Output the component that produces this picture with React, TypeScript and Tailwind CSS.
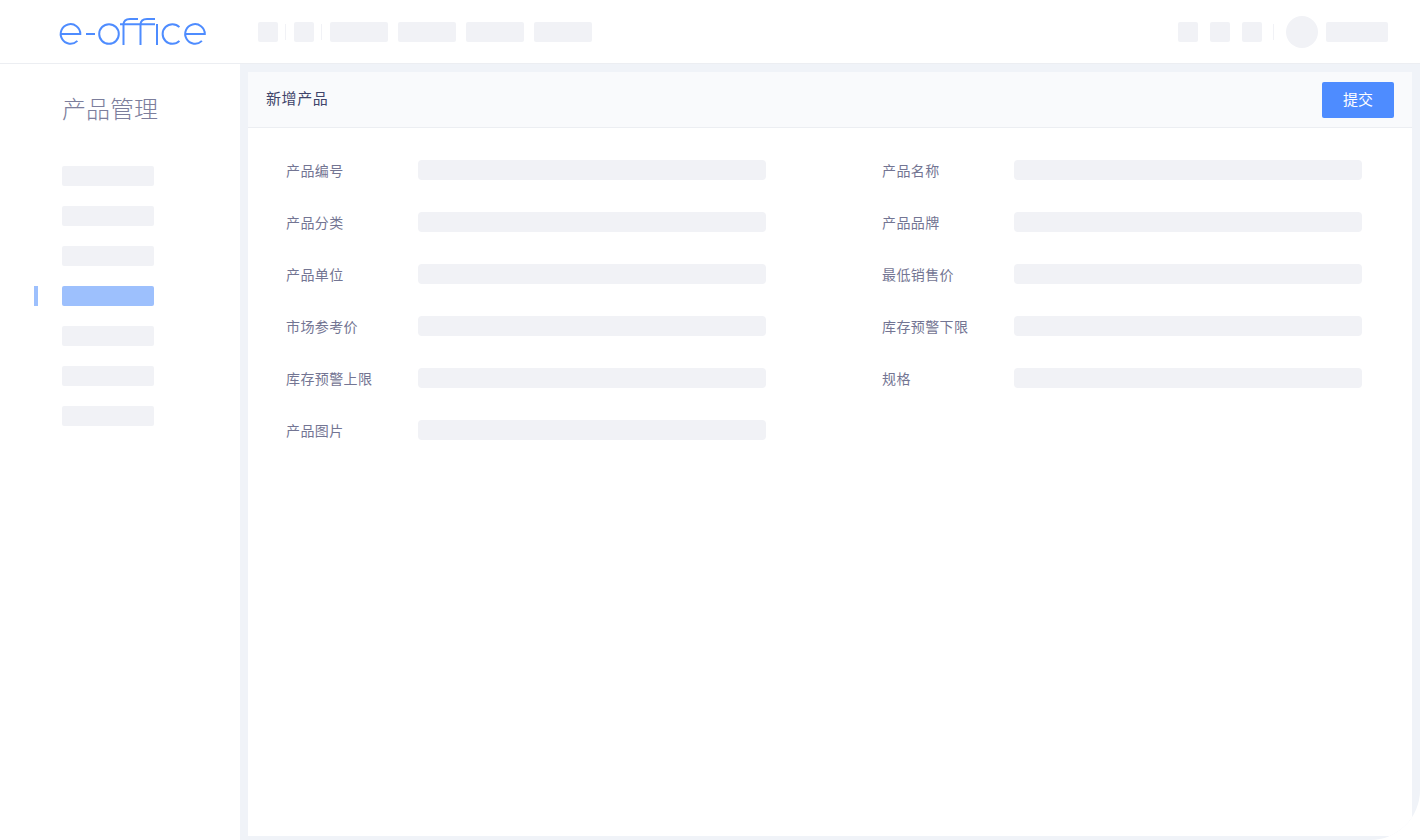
import React from 'react'

const fields = [
  '产品编号', '产品名称',
  '产品分类', '产品品牌',
  '产品单位', '最低销售价',
  '市场参考价', '库存预警下限',
  '库存预警上限', '规格',
  '产品图片',
]

function Logo() {
  return (
    <svg width="150" height="30" viewBox="0 0 150 30" fill="none" stroke="#4e8cff" strokeWidth="2" className="block">
      <path d="M2.7 17H22.3A9.8 9.8 0 1 0 19.4 23.9" />
      <path d="M28 17H37" />
      <circle cx="51" cy="17" r="9.8" />
      <path d="M65.5 28V8Q65.5 2 72 2H80" />
      <path d="M62 7.2H97" />
      <path d="M82.5 28V8Q82.5 2 89 2H97" />
      <path d="M99 7V28" />
      <path d="M121.4 10.1A9.8 9.8 0 1 0 121.4 23.9" />
      <path d="M127.2 17H146.8A9.8 9.8 0 1 0 143.9 23.9" />
    </svg>
  )
}

function Header() {
  return (
    <header className="h-16 shrink-0 flex items-center bg-white border-b border-[#eceef2]">
      <div className="w-[258px] shrink-0 pl-[58px] pt-px">
        <Logo />
      </div>
      <div className="w-5 h-5 rounded-xs bg-[#f1f2f6]" />
      <div className="w-px h-4 ml-[7px] mr-2 bg-[#f1f2f6]" />
      <div className="w-5 h-5 rounded-xs bg-[#f1f2f6]" />
      <div className="w-px h-4 ml-[7px] mr-2 bg-[#f1f2f6]" />
      <div className="flex gap-2.5">
        <div className="w-[58px] h-5 rounded-xs bg-[#f1f2f6]" />
        <div className="w-[58px] h-5 rounded-xs bg-[#f1f2f6]" />
        <div className="w-[58px] h-5 rounded-xs bg-[#f1f2f6]" />
        <div className="w-[58px] h-5 rounded-xs bg-[#f1f2f6]" />
      </div>
      <div className="ml-auto pr-8 flex items-center">
        <div className="flex gap-3">
          <div className="w-5 h-5 rounded-xs bg-[#f1f2f6]" />
          <div className="w-5 h-5 rounded-xs bg-[#f1f2f6]" />
          <div className="w-5 h-5 rounded-xs bg-[#f1f2f6]" />
        </div>
        <div className="w-px h-4 ml-[11px] mr-3 bg-[#f1f2f6]" />
        <div className="w-8 h-8 rounded-full bg-[#f1f2f6]" />
        <div className="w-[62px] h-5 ml-2 rounded-xs bg-[#f1f2f6]" />
      </div>
    </header>
  )
}

function Sidebar() {
  const items = [0, 1, 2, 3, 4, 5, 6]
  return (
    <aside className="w-60 shrink-0 bg-white pt-[30px]">
      <h2 className="pl-[62px] text-2xl leading-[28px] font-light text-[#7c7e9c]">产品管理</h2>
      <ul className="mt-11 flex flex-col gap-5">
        {items.map((i) => (
          <li key={i} className="flex items-center h-5">
            <span className={i === 3 ? 'w-1 h-5 ml-[34px] bg-[#9dc0fd]' : 'w-1 h-5 ml-[34px]'} />
            <span className={i === 3 ? 'w-[92px] h-5 ml-6 rounded-xs bg-[#9dc0fd]' : 'w-[92px] h-5 ml-6 rounded-xs bg-[#f1f2f6]'} />
          </li>
        ))}
      </ul>
    </aside>
  )
}

export default function App() {
  return (
    <div
      className="h-[840px] w-[1420px] overflow-hidden flex flex-col bg-white"
      style={{ fontFamily: '"Noto Sans CJK SC", "Noto Sans", sans-serif' }}
    >
      <Header />
      <div className="flex flex-1 min-h-0">
        <Sidebar />
        <main className="flex-1 pt-2 pl-2 pr-2 pb-1 bg-[#f0f3f8] rounded-br-[50px] overflow-hidden">
          <div className="h-full bg-white">
            <div className="h-14 flex items-center justify-between pl-[18px] pr-[18px] bg-[#f9fafc] border-b border-[#eceef2]">
              <h1 className="pb-0.5 text-[15px] tracking-[0.6px] text-[#40456b]">新增产品</h1>
              <button className="w-[72px] h-9 rounded-xs bg-[#4e8cff] text-[15px] text-white">提交</button>
            </div>
            <div className="pt-8 pl-[38px] grid grid-cols-[596px_1fr] gap-y-8">
              {fields.map((f) => (
                <div key={f} className="flex items-center h-5">
                  <span className="w-[132px] text-sm tracking-[0.4px] text-[#737593]">{f}</span>
                  <span className="w-[348px] h-5 rounded-[4px] bg-[#f1f2f6]" />
                </div>
              ))}
            </div>
          </div>
        </main>
      </div>
    </div>
  )
}
